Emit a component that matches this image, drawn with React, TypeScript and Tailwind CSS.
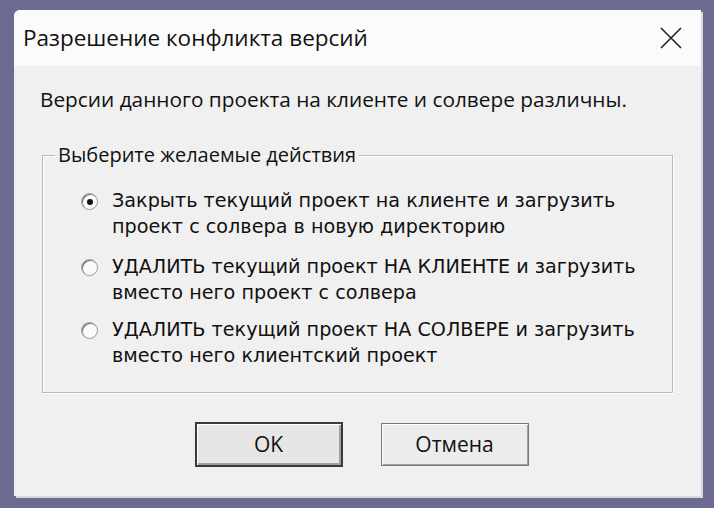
import React from 'react'

function Radio({ checked }: { checked?: boolean }) {
  return (
    <span className="relative mt-[5px] flex h-[17px] w-[17px] shrink-0 items-center justify-center rounded-full border border-[#9a9a9a] bg-[#fafafa] shadow-[inset_1px_1px_0_#707070]">
      {checked && <span className="h-[6px] w-[6px] rounded-full bg-[#111]" />}
    </span>
  )
}

function Option({ checked, lines, className }: { checked?: boolean; lines: [string, string]; className?: string }) {
  return (
    <div className={'flex items-start gap-[14px] ' + (className ?? '')}>
      <Radio checked={checked} />
      <div className="text-[19.2px] leading-[26px] text-[#111]">
        <div>{lines[0]}</div>
        <div>{lines[1]}</div>
      </div>
    </div>
  )
}

const segoe = { fontFamily: '"Open Sans", "Noto Sans", sans-serif' }

export default function App() {
  return (
    <div className="h-[508px] w-[714px] bg-[#6d6b92] p-[10px] pl-[14px] pr-[13px]">
      <div className="flex h-[486px] flex-col overflow-hidden rounded-tl-[6px] bg-[#f0f0f0] shadow-[2px_2px_0_#d8d8d8]" style={{ fontFamily: '"DejaVu Sans", Tahoma, sans-serif' }}>
        <div className="flex h-[56px] items-center justify-between bg-[#fbfbfb] pl-[9px] pr-[19px]">
          <span className="text-[22.5px] text-[#111]" style={segoe}>
            Разрешение конфликта версий
          </span>
          <svg width="22" height="22" viewBox="0 0 22 22" className="text-[#222]">
            <path d="M1 1 L21 21 M21 1 L1 21" stroke="currentColor" strokeWidth="1.6" fill="none" />
          </svg>
        </div>
        <div className="flex flex-1 flex-col px-[28px] pt-[20px]">
          <p className="-ml-[2px] text-[20.8px] leading-[26px] text-[#111]" style={segoe}>
            Версии данного проекта на клиенте и солвере различны.
          </p>
          <fieldset className="mt-[31px] flex flex-col border border-[#b8b8b8] pl-[38px] pb-[23px] pt-[21px] shadow-[1px_1px_0_#fff,inset_1px_1px_0_#fff]">
            <legend className="-ml-[26px] px-[3px] text-[20px] leading-[24px] text-[#111]" style={segoe}>
              Выберите желаемые действия
            </legend>
            <Option checked lines={['Закрыть текущий проект на клиенте и загрузить', 'проект с солвера в новую директорию']} />
            <Option className="mt-[14px]" lines={['УДАЛИТЬ текущий проект НА КЛИЕНТЕ и загрузить', 'вместо него проект с солвера']} />
            <Option className="mt-[11px]" lines={['УДАЛИТЬ текущий проект НА СОЛВЕРЕ и загрузить', 'вместо него клиентский проект']} />
          </fieldset>
          <div className="mt-[29px] flex justify-center gap-[38px] pl-[8px]">
            <button className="h-[45px] w-[148px] border-2 border-[#3a3a3a] bg-[#e6e6e6] text-[21px] text-[#111] shadow-[inset_1px_1px_0_#fff,inset_-2px_-2px_0_#a0a0a0]" style={segoe}>
              OK
            </button>
            <button className="mt-[1px] h-[43px] w-[148px] border border-[#777] bg-[#ececec] text-[21px] text-[#111] shadow-[inset_1px_1px_0_#fff,inset_-1px_-1px_0_#a0a0a0]" style={segoe}>
              Отмена
            </button>
          </div>
        </div>
      </div>
    </div>
  )
}
